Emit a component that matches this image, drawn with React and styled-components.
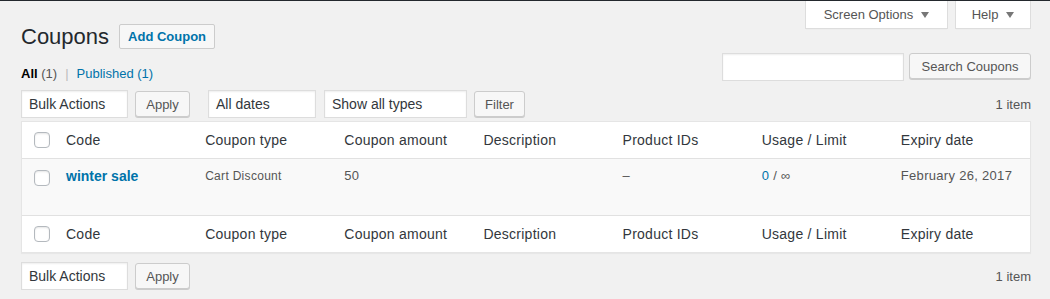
import React from "react";
import styled, { createGlobalStyle } from "styled-components";

const GlobalStyle = createGlobalStyle`
  html, body {
    margin: 0;
    padding: 0;
    background: #f1f1f1;
  }
  body {
    font-family: "Liberation Sans", Arial, sans-serif;
    font-size: 13px;
    color: #23282d;
  }
`;

const AdminBar = styled.div`
  height: 1px;
  background: #23282d;
`;

const Wrap = styled.div`
  padding: 0 19px 0 21px;
`;

const HeaderRow = styled.div`
  display: flex;
  justify-content: space-between;
  align-items: flex-start;
`;

const TitleGroup = styled.div`
  display: flex;
  align-items: center;
  gap: 10px;
  padding-top: 22px;
`;

const Title = styled.h1`
  margin: 0;
  font-size: 22px;
  font-weight: 400;
  line-height: 27px;
  color: #23282d;
`;

const AddButton = styled.a`
  display: inline-flex;
  align-items: center;
  height: 23px;
  padding: 0 8px;
  border: 1px solid #ccc;
  border-radius: 2px;
  background: #f7f7f7;
  color: #0073aa;
  font-size: 13px;
  font-weight: 600;
  text-decoration: none;
`;

const MetaTabs = styled.div`
  display: flex;
  gap: 7px;
`;

const MetaTab = styled.button`
  display: flex;
  align-items: center;
  justify-content: center;
  gap: 8px;
  width: ${(p) => p.$w}px;
  height: 28px;
  border: 1px solid #ddd;
  border-top: none;
  background: #fff;
  box-shadow: 0 1px 1px -1px rgba(0, 0, 0, 0.1);
  font-family: inherit;
  font-size: 13px;
  color: #555;
  padding: 0;
`;

const Caret = styled.span`
  width: 0;
  height: 0;
  border-left: 4px solid transparent;
  border-right: 4px solid transparent;
  border-top: 6px solid #777;
`;

const SubRow = styled.div`
  display: flex;
  justify-content: space-between;
  margin-top: 3px;
`;

const ViewLinks = styled.div`
  padding-top: 12px;
  line-height: 18px;
  font-size: 13px;
  color: #555;
`;

const Current = styled.span`
  font-weight: 600;
  color: #000;
`;

const ViewLink = styled.a`
  color: #0073aa;
  text-decoration: none;
`;

const Sep = styled.span`
  color: #bbb;
  margin: 0 8px;
`;

const Count = styled.span`
  color: ${(p) => p.$color || "#555"};
`;

const SearchBox = styled.div`
  display: flex;
  gap: 5px;
`;

const TextInput = styled.div`
  width: 180px;
  height: 26px;
  border: 1px solid #ddd;
  background: #fff;
  box-shadow: inset 0 1px 2px rgba(0, 0, 0, 0.07);
`;

const Button = styled.button`
  height: 26px;
  width: ${(p) => (p.$w ? `${p.$w}px` : "auto")};
  padding: 0 10px;
  border: 1px solid #ccc;
  border-radius: 3px;
  background: #f7f7f7;
  box-shadow: 0 1px 0 #ccc;
  font-family: inherit;
  font-size: 13px;
  color: #555;
  margin-right: ${(p) => p.$mr || 0}px;
`;

const NavRow = styled.div`
  display: flex;
  align-items: center;
  margin-top: ${(p) => p.$mt}px;
`;

const Select = styled.div`
  display: flex;
  align-items: center;
  box-sizing: border-box;
  width: ${(p) => p.$w}px;
  height: 28px;
  padding: 0 7px;
  margin-right: ${(p) => p.$mr || 0}px;
  border: 1px solid #ddd;
  background: #fff;
  box-shadow: inset 0 1px 2px rgba(0, 0, 0, 0.07);
  font-size: 14px;
  color: #32373c;
`;

const ItemCount = styled.div`
  margin-left: auto;
  font-size: 13px;
  color: #555;
`;

const Table = styled.table`
  width: 100%;
  margin-top: 3px;
  border: 1px solid #e5e5e5;
  border-spacing: 0;
  background: #fff;
  box-shadow: 0 1px 1px rgba(0, 0, 0, 0.04);
  table-layout: fixed;
`;

const CheckCol = styled.col`
  width: 34px;
`;

const Th = styled.th`
  text-align: left;
  font-weight: 400;
  font-size: 14px;
  letter-spacing: 0.25px;
  color: #32373c;
  height: 36px;
  padding: 0 10px;
  line-height: 20px;
  border-${(p) => p.$side}: 1px solid #e1e1e1;
`;

const CheckCell = styled.td`
  padding: 0 0 0 12px;
  vertical-align: ${(p) => (p.$top ? "top" : "middle")};
  padding-top: ${(p) => (p.$top ? "11px" : "0")};
  border-${(p) => p.$side || "none"}: ${(p) => (p.$side ? "1px solid #e1e1e1" : "0")};
`;

const Box = styled.span`
  display: block;
  box-sizing: border-box;
  width: 16px;
  height: 16px;
  border: 1px solid #b4b9be;
  border-radius: 4px;
  background: #fff;
  box-shadow: inset 0 1px 2px rgba(0, 0, 0, 0.1);
`;

const BodyRow = styled.tr`
  background: #f9f9f9;
  height: 56px;
`;

const Td = styled.td`
  vertical-align: top;
  padding: 7px 10px 0;
  line-height: 20px;
  font-size: ${(p) => p.$size || 13}px;
  letter-spacing: 0.3px;
  color: ${(p) => p.$color || "#555"};
`;

const CodeLink = styled.a`
  font-weight: 700;
  font-size: 14px;
  letter-spacing: 0;
  color: #0073aa;
  text-decoration: none;
`;

const Blue = styled.span`
  color: #0073aa;
`;

const columns = [
  "Code",
  "Coupon type",
  "Coupon amount",
  "Description",
  "Product IDs",
  "Usage / Limit",
  "Expiry date",
];

const HeaderCells = ({ side }) => (
  <tr>
    <CheckCell $side={side}>
      <Box />
    </CheckCell>
    {columns.map((c) => (
      <Th key={c} $side={side}>
        {c}
      </Th>
    ))}
  </tr>
);

const BulkRow = ({ mt, filters }) => (
  <NavRow $mt={mt}>
    <Select $w={107} $mr={7}>Bulk Actions</Select>
    <Button $w={55} $mr={18}>Apply</Button>
    {filters && (
      <>
        <Select $w={108} $mr={8}>All dates</Select>
        <Select $w={143} $mr={7}>Show all types</Select>
        <Button $w={51}>Filter</Button>
      </>
    )}
    <ItemCount>1 item</ItemCount>
  </NavRow>
);

export default function App() {
  return (
    <>
      <GlobalStyle />
      <AdminBar />
      <Wrap>
        <HeaderRow>
          <TitleGroup>
            <Title>Coupons</Title>
            <AddButton href="#">Add Coupon</AddButton>
          </TitleGroup>
          <MetaTabs>
            <MetaTab $w={143}>
              Screen Options <Caret />
            </MetaTab>
            <MetaTab $w={76}>
              Help <Caret />
            </MetaTab>
          </MetaTabs>
        </HeaderRow>

        <SubRow>
          <ViewLinks>
            <Current>All</Current> <Count>(1)</Count>
            <Sep>|</Sep>
            <ViewLink href="#">
              Published <Count $color="#0073aa">(1)</Count>
            </ViewLink>
          </ViewLinks>
          <SearchBox>
            <TextInput />
            <Button $w={122}>Search Coupons</Button>
          </SearchBox>
        </SubRow>

        <BulkRow mt={7} filters />

        <Table>
          <colgroup>
            <CheckCol />
          </colgroup>
          <thead>
            <HeaderCells side="bottom" />
          </thead>
          <tbody>
            <BodyRow>
              <CheckCell $top>
                <Box />
              </CheckCell>
              <Td>
                <CodeLink href="#">winter sale</CodeLink>
              </Td>
              <Td $size={12}>Cart Discount</Td>
              <Td>50</Td>
              <Td></Td>
              <Td>–</Td>
              <Td>
                <Blue>0</Blue> / ∞
              </Td>
              <Td>February 26, 2017</Td>
            </BodyRow>
          </tbody>
          <tfoot>
            <HeaderCells side="top" />
          </tfoot>
        </Table>

        <BulkRow mt={9} />
      </Wrap>
    </>
  );
}
